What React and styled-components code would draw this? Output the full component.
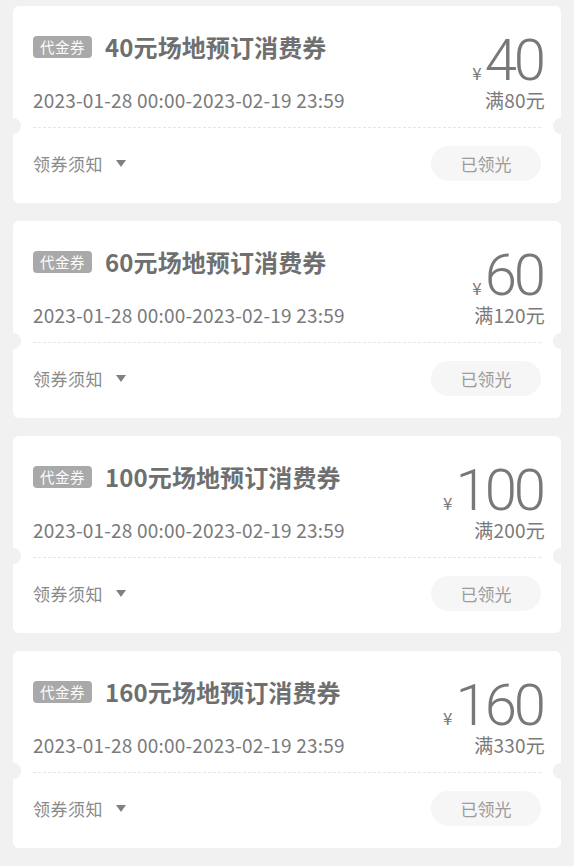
import React from "react";
import styled, { createGlobalStyle } from "styled-components";

const GlobalStyle = createGlobalStyle`
  body {
    margin: 0;
    background: #f1f1f1;
    font-family: "Noto Sans CJK SC", "Noto Sans", sans-serif;
  }
`;

const List = styled.div`
  display: flex;
  flex-direction: column;
  gap: 18px;
  padding: 6px 13px 20px;
`;

const Card = styled.div`
  position: relative;
  height: 197px;
  background: #ffffff;
  border-radius: 6px;
  display: flex;
  flex-direction: column;

  &::before,
  &::after {
    content: "";
    position: absolute;
    top: 112px;
    width: 16px;
    height: 16px;
    border-radius: 50%;
    background: #f1f1f1;
  }
  &::before {
    left: -8px;
  }
  &::after {
    right: -8px;
  }
`;

const Top = styled.div`
  height: 121px;
  box-sizing: border-box;
  display: flex;
  justify-content: space-between;
  align-items: flex-end;
  padding: 0 16px 15px 20px;
`;

const Info = styled.div`
  display: flex;
  flex-direction: column;
  gap: 26px;
`;

const TitleRow = styled.div`
  display: flex;
  align-items: center;
  gap: 13px;
  height: 30px;
`;

const Tag = styled.span`
  display: inline-flex;
  align-items: center;
  justify-content: center;
  width: 59px;
  height: 22px;
  border-radius: 4px;
  background: #a9a9a9;
  color: #fbfbfb;
  font-size: 14.5px;
  line-height: 22px;
  letter-spacing: 0.5px;
`;

const Title = styled.span`
  font-size: 24px;
  font-weight: 700;
  color: #6f6f6f;
  letter-spacing: 0.1px;
  line-height: 30px;
`;

const Line = styled.div`
  font-size: 19px;
  line-height: 24px;
  height: 24px;
  color: #7a7a7a;
  letter-spacing: 0.2px;
  white-space: nowrap;
`;

const Price = styled.div`
  display: flex;
  flex-direction: column;
  align-items: flex-end;
`;

const Amount = styled.div`
  display: flex;
  align-items: baseline;
  height: 56px;
  color: #787878;
`;

const Yen = styled.span`
  font-size: 17px;
  line-height: 20px;
  margin-right: 3px;
`;

const Value = styled.span`
  display: block;
  height: 56px;
  line-height: 56px;
  font-family: Roboto, "Noto Sans", sans-serif;
  font-weight: 300;
  font-size: 58px;
  letter-spacing: -3px;
  margin-right: 2px;
`;

const Divider = styled.div`
  margin: 0 20px;
  height: 0;
  border-top: 1px dashed #e6e6e6;
`;

const Bottom = styled.div`
  flex: 1;
  display: flex;
  align-items: center;
  justify-content: space-between;
  padding: 0 20px 4px;
`;

const Notice = styled.div`
  display: flex;
  align-items: center;
  gap: 13px;
  font-size: 17px;
  letter-spacing: 0.5px;
  color: #8a8a8a;
`;

const Caret = styled.span`
  width: 0;
  height: 0;
  border-left: 5px solid transparent;
  border-right: 5px solid transparent;
  border-top: 7px solid #808080;
`;

const Button = styled.div`
  width: 110px;
  height: 35px;
  border-radius: 18px;
  background: #f6f6f6;
  color: #9c9c9c;
  font-size: 17px;
  display: flex;
  align-items: center;
  justify-content: center;
`;

const coupons = [
  { value: 40, min: 80 },
  { value: 60, min: 120 },
  { value: 100, min: 200 },
  { value: 160, min: 330 },
];

const Coupon = ({ value, min }) => (
  <Card>
    <Top>
      <Info>
        <TitleRow>
          <Tag>代金券</Tag>
          <Title>{value}元场地预订消费券</Title>
        </TitleRow>
        <Line>2023-01-28 00:00-2023-02-19 23:59</Line>
      </Info>
      <Price>
        <Amount>
          <Yen>¥</Yen>
          <Value>{value}</Value>
        </Amount>
        <Line>满{min}元</Line>
      </Price>
    </Top>
    <Divider />
    <Bottom>
      <Notice>
        领券须知
        <Caret />
      </Notice>
      <Button>已领光</Button>
    </Bottom>
  </Card>
);

const App = () => (
  <>
    <GlobalStyle />
    <List>
      {coupons.map(c => (
        <Coupon key={c.value} {...c} />
      ))}
    </List>
  </>
);

export default App;
